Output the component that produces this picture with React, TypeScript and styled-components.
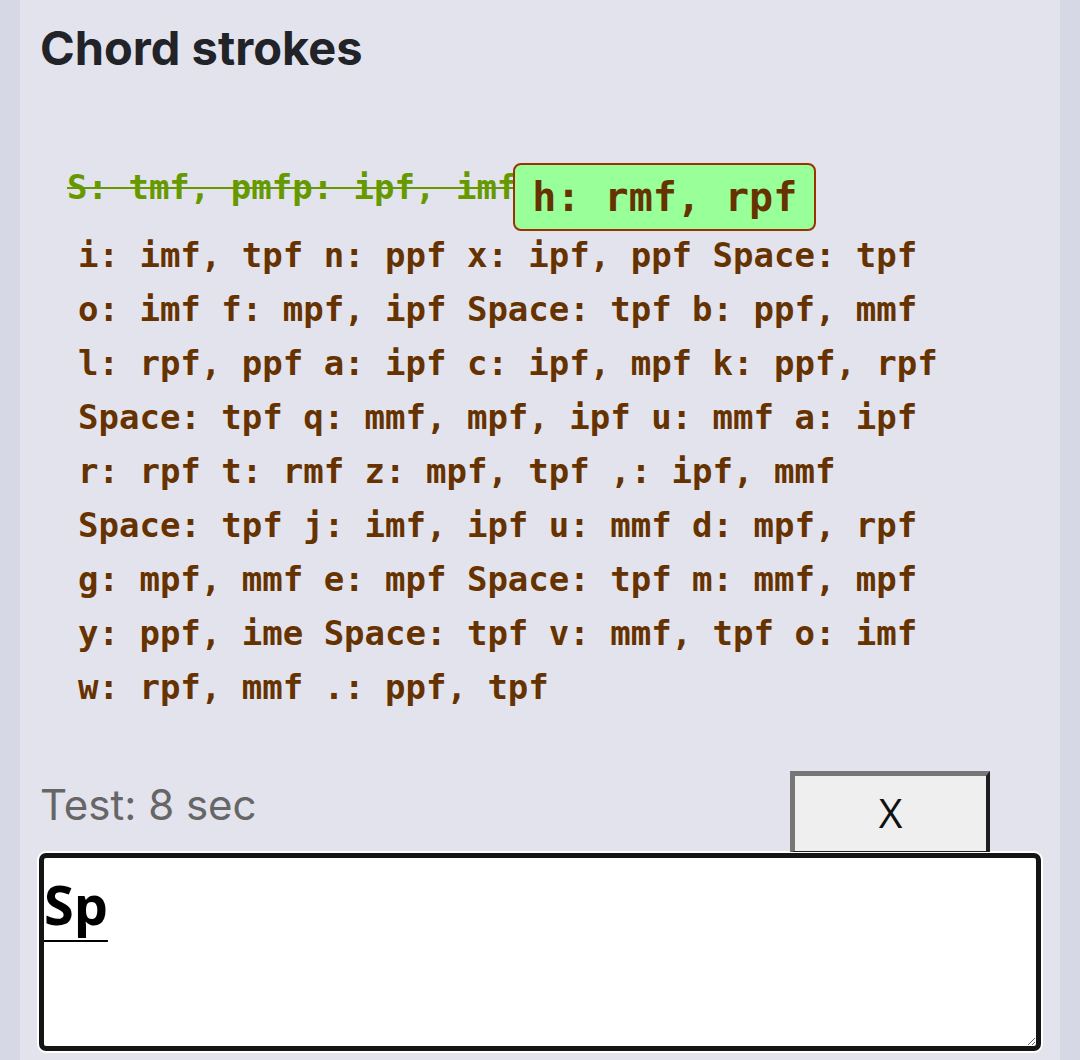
import React from "react";
import styled, { createGlobalStyle } from "styled-components";

const Global = createGlobalStyle`
  html, body {
    margin: 0;
    padding: 0;
    background: #d6d8e6;
  }
  body {
    font-family: "Inter", "Liberation Sans", sans-serif;
  }
`;

const Panel = styled.main`
  margin: 0 20px;
  min-height: 1060px;
  background: #e3e3ed;
  padding: 19px 20px 0 20px;
  box-sizing: border-box;
`;

const Title = styled.h1`
  margin: 0;
  font-family: "Inter", sans-serif;
  font-weight: 700;
  font-size: 47px;
  line-height: 57px;
  color: #212328;
`;

const Strokes = styled.section`
  margin-top: 84px;
  font-family: "DejaVu Sans Mono", monospace;
  font-weight: 700;
  font-size: 34px;
  line-height: 54px;
  color: #663300;
  padding-left: 38px;
`;

const Line = styled.div`
  display: flex;
  align-items: flex-start;
  white-space: pre;
`;

const FirstLine = styled(Line)`
  margin-left: -11px;
  height: 68px;
`;

const Done = styled.span`
  color: #669900;
  text-decoration: line-through;
  text-decoration-thickness: 2px;
`;

const Current = styled.span`
  margin-top: 3px;
  margin-left: -4px;
  font-size: 40px;
  line-height: 47px;
  padding: 9px 17px 8px 17px;
  background: #99ff99;
  border: 2px solid #993300;
  border-radius: 8px;
  color: #663300;
`;

const TestRow = styled.div`
  margin-top: 57px;
  display: flex;
  justify-content: space-between;
  align-items: flex-start;
`;

const Timer = styled.span`
  margin-top: 8px;
  font-family: "Inter", sans-serif;
  font-weight: 400;
  font-size: 42px;
  color: #666666;
`;

const CloseButton = styled.button`
  width: 200px;
  height: 81px;
  margin-right: 50px;
  box-sizing: border-box;
  background: #efefef;
  border-style: solid;
  border-width: 5px 4px 1px 5px;
  border-color: #767676 #1e1e1e #1e1e1e #767676;
  font-family: "Open Sans", sans-serif;
  font-size: 41px;
  color: #111;
  padding: 0 0 4px 0;
  display: flex;
  align-items: center;
  justify-content: center;
`;

const Entry = styled.textarea`
  display: block;
  box-sizing: border-box;
  width: calc(100% + 2px);
  margin: 1px 0 0 -1px;
  height: 198px;
  border: 5px solid #151515;
  border-radius: 7px;
  box-shadow: 0 0 0 2px #ffffff;
  outline: none;
  background: #fff;
  padding: 9px 0 0 0;
  font-family: "Open Sans", sans-serif;
  font-weight: 700;
  font-size: 54px;
  color: #000;
  text-decoration: underline;
  text-decoration-thickness: 2px;
  text-underline-offset: 15px;
`;

const lines: string[] = [
  "i: imf, tpf n: ppf x: ipf, ppf Space: tpf",
  "o: imf f: mpf, ipf Space: tpf b: ppf, mmf",
  "l: rpf, ppf a: ipf c: ipf, mpf k: ppf, rpf",
  "Space: tpf q: mmf, mpf, ipf u: mmf a: ipf",
  "r: rpf t: rmf z: mpf, tpf ,: ipf, mmf",
  "Space: tpf j: imf, ipf u: mmf d: mpf, rpf",
  "g: mpf, mmf e: mpf Space: tpf m: mmf, mpf",
  "y: ppf, ime Space: tpf v: mmf, tpf o: imf",
  "w: rpf, mmf .: ppf, tpf",
];

export default function App() {
  return (
    <>
      <Global />
      <Panel>
        <Title>Chord strokes</Title>
        <Strokes>
          <FirstLine>
            <Done>S: tmf, pmfp: ipf, imf</Done>
            <Current>h: rmf, rpf</Current>
          </FirstLine>
          {lines.map((l, i) => (
            <Line key={i}>{l}</Line>
          ))}
        </Strokes>
        <TestRow>
          <Timer>Test: 8 sec</Timer>
          <CloseButton>X</CloseButton>
        </TestRow>
        <Entry defaultValue="Sp" spellCheck={false} />
      </Panel>
    </>
  );
}
